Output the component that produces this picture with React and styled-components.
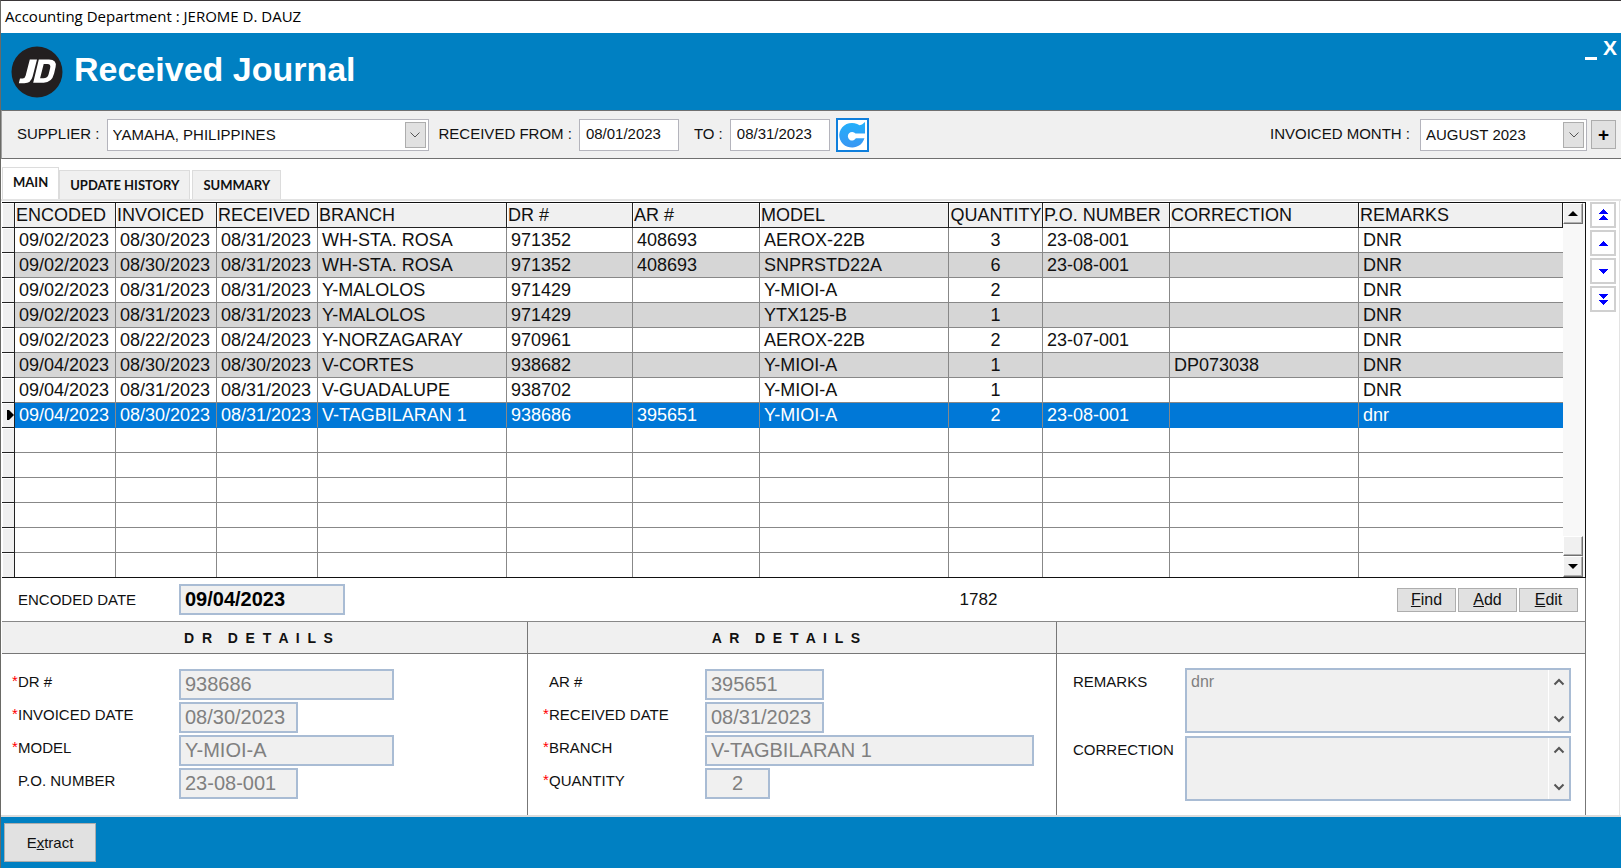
import React from 'react';
import styled, { createGlobalStyle, css } from 'styled-components';

const columns = [
  { key: 'encoded', title: 'ENCODED', width: 101 },
  { key: 'invoiced', title: 'INVOICED', width: 101 },
  { key: 'received', title: 'RECEIVED', width: 101 },
  { key: 'branch', title: 'BRANCH', width: 189 },
  { key: 'dr', title: 'DR #', width: 126 },
  { key: 'ar', title: 'AR #', width: 127 },
  { key: 'model', title: 'MODEL', width: 189 },
  { key: 'quantity', title: 'QUANTITY', width: 94, center: true },
  { key: 'po', title: 'P.O. NUMBER', width: 127 },
  { key: 'correction', title: 'CORRECTION', width: 189 },
  { key: 'remarks', title: 'REMARKS', width: 204 },
];

const rows = [
  { encoded: '09/02/2023', invoiced: '08/30/2023', received: '08/31/2023', branch: 'WH-STA. ROSA', dr: '971352', ar: '408693', model: 'AEROX-22B', quantity: 3, po: '23-08-001', remarks: 'DNR' },
  { encoded: '09/02/2023', invoiced: '08/30/2023', received: '08/31/2023', branch: 'WH-STA. ROSA', dr: '971352', ar: '408693', model: 'SNPRSTD22A', quantity: 6, po: '23-08-001', remarks: 'DNR' },
  { encoded: '09/02/2023', invoiced: '08/31/2023', received: '08/31/2023', branch: 'Y-MALOLOS', dr: '971429', model: 'Y-MIOI-A', quantity: 2, remarks: 'DNR' },
  { encoded: '09/02/2023', invoiced: '08/31/2023', received: '08/31/2023', branch: 'Y-MALOLOS', dr: '971429', model: 'YTX125-B', quantity: 1, remarks: 'DNR' },
  { encoded: '09/02/2023', invoiced: '08/22/2023', received: '08/24/2023', branch: 'Y-NORZAGARAY', dr: '970961', model: 'AEROX-22B', quantity: 2, po: '23-07-001', remarks: 'DNR' },
  { encoded: '09/04/2023', invoiced: '08/30/2023', received: '08/30/2023', branch: 'V-CORTES', dr: '938682', model: 'Y-MIOI-A', quantity: 1, correction: 'DP073038', remarks: 'DNR' },
  { encoded: '09/04/2023', invoiced: '08/31/2023', received: '08/31/2023', branch: 'V-GUADALUPE', dr: '938702', model: 'Y-MIOI-A', quantity: 1, remarks: 'DNR' },
  { encoded: '09/04/2023', invoiced: '08/30/2023', received: '08/31/2023', branch: 'V-TAGBILARAN 1', dr: '938686', ar: '395651', model: 'Y-MIOI-A', quantity: 2, po: '23-08-001', remarks: 'dnr' },
  {}, {}, {}, {}, {}, {},
];

const selectedRow = 7;

const Chevron = ({ up }) => (
  <svg width="12" height="8" viewBox="0 0 12 8" fill="none" stroke="currentColor" aria-hidden="true">
    <path d={up ? 'M1.5 6.5L6 2l4.5 4.5' : 'M1.5 1.5L6 6l4.5-4.5'} />
  </svg>
);

const Triangle = ({ down, double }) => (
  <svg width="10" height="12" viewBox="0 0 10 12" fill="currentColor" shapeRendering="crispEdges" aria-hidden="true">
    {double ? (
      <path d={down ? 'M0 1h10L5 6zM0 7h10L5 12z' : 'M0 5h10L5 0zM0 11h10L5 6z'} />
    ) : (
      <path d={down ? 'M0 4h10L5 9z' : 'M0 9h10L5 4z'} />
    )}
  </svg>
);

const Logo = () => (
  <svg width="52" height="52" viewBox="0 0 52 52" aria-label="JD" role="img">
    <circle cx="26" cy="26" r="25.5" fill="#231f20" />
    <path
      d="M18.8 13.5h7.2l-4.3 16.8q-1.7 7-8.4 7H7.8l1.2-4.8h2.6q2.3 0 3-2.8z"
      fill="#fff"
    />
    <path
      fillRule="evenodd"
      d="M27.8 13.5H38q8.200 0 6.600 7.600l-1.500 6.400q-2.300 9.200-10.400 9.200H22.200zM32.700 18l-3.600 14.300h3.100q4.500 0 5.500-4.400l1.400-5.600q1.100-4.300-2.700-4.300z"
      fill="#fff"
    />
  </svg>
);

const DropDown = ({ id, value, width }) => (
  <SelectBox $width={width}>
    <select id={id} defaultValue={value}>
      <option>{value}</option>
    </select>
    <span><Chevron /></span>
  </SelectBox>
);

const Field = ({ id, label, value, required, width, center }) => (
  <FieldRow>
    <FieldLabel htmlFor={id}>
      <i>{required && '*'}</i>
      {label}
    </FieldLabel>
    <TextField id={id} defaultValue={value} $width={width} $center={center} disabled />
  </FieldRow>
);

const Memo = ({ id, label, value }) => (
  <MemoRow>
    <label htmlFor={id}>{label}</label>
    <MemoBox>
      <textarea id={id} defaultValue={value} disabled />
      <div>
        <Chevron up />
        <Chevron />
      </div>
    </MemoBox>
  </MemoRow>
);

const App = () => {
  return (
    <>
      <GlobalStyle />
      <Window>
        <TitleBar>Accounting Department : JEROME D. DAUZ</TitleBar>

        <Header>
          <Logo />
          <h1>Received Journal</h1>
          <WindowButtons>
            <button type="button" aria-label="Minimize">
              <svg width="12" height="3" viewBox="0 0 12 3" aria-hidden="true"><path fill="#fff" d="M0 0h12v3H0z" /></svg>
            </button>
            <button type="button">X</button>
          </WindowButtons>
        </Header>

        <Filters>
          <label htmlFor="supplier">SUPPLIER :</label>
          <DropDown id="supplier" value="YAMAHA, PHILIPPINES" width={322} />
          <label htmlFor="from">RECEIVED FROM :</label>
          <DateInput id="from" defaultValue="08/01/2023" />
          <label htmlFor="to">TO :</label>
          <DateInput id="to" defaultValue="08/31/2023" />
          <RefreshButton type="button" aria-label="Refresh">
            <svg width="28" height="28" viewBox="0 0 28 28" aria-hidden="true">
              <defs>
                <linearGradient id="refresh" x2="0" y2="1">
                  <stop offset="0" stopColor="#22b0fb" />
                  <stop offset="1" stopColor="#3a96f3" />
                </linearGradient>
              </defs>
              <path
                d="M27 1v12H14v4h12.500A12.800 12.300 0 1 1 21.500 4.200L24 3.500z"
                fill="url(#refresh)"
              />
              <path d="M17.500 12.500a4.300 4.300 0 1 0 .4 4.800H27v-1.200H15v-2.600h12v-1z" fill="#fff" />
            </svg>
          </RefreshButton>
          <Spacer />
          <label htmlFor="month">INVOICED MONTH :</label>
          <DropDown id="month" value="AUGUST 2023" width={167} />
          <PlusButton type="button">+</PlusButton>
        </Filters>

        <Tabs role="tablist">
          <Tab type="button" role="tab" aria-selected="true" $active>MAIN</Tab>
          <Tab type="button" role="tab" aria-selected="false">UPDATE HISTORY</Tab>
          <Tab type="button" role="tab" aria-selected="false">SUMMARY</Tab>
        </Tabs>

        <Page>
          <Panel>
            <Grid>
              <Table>
                <colgroup>
                  <Col $width={13} />
                  {columns.map((c) => <Col key={c.key} $width={c.width} />)}
                </colgroup>
                <thead>
                  <tr>
                    <Marker />
                    {columns.map((c) => <HeadCell key={c.key} $center={c.center}>{c.title}</HeadCell>)}
                  </tr>
                </thead>
                <tbody>
                  {rows.map((row, i) => (
                    <Row key={i} $striped={i < selectedRow && i % 2 === 1} $selected={i === selectedRow}>
                      <Marker>
                        {i === selectedRow && (
                          <svg width="7" height="10" viewBox="0 0 7 10" aria-hidden="true"><path d="M0 0h2l5 5-5 5H0z" /></svg>
                        )}
                      </Marker>
                      {columns.map((c) => <Cell key={c.key} $center={c.center}>{row[c.key]}</Cell>)}
                    </Row>
                  ))}
                </tbody>
              </Table>
              <ScrollBar>
                <ScrollButton type="button" aria-label="Scroll up">
                  <svg width="10" height="5" viewBox="0 0 10 5" aria-hidden="true"><path d="M0 5h10L5 0z" /></svg>
                </ScrollButton>
                <Spacer />
                <ScrollThumb />
                <ScrollButton type="button" aria-label="Scroll down">
                  <svg width="10" height="5" viewBox="0 0 10 5" aria-hidden="true"><path d="M0 0h10L5 5z" /></svg>
                </ScrollButton>
              </ScrollBar>
            </Grid>

            <EncodedRow>
              <FieldLabel htmlFor="encoded"><i />ENCODED DATE</FieldLabel>
              <EncodedInput id="encoded" defaultValue="09/04/2023" readOnly />
              <RecordCount>1782</RecordCount>
              <SmallButton type="button"><u>F</u>ind</SmallButton>
              <SmallButton type="button"><u>A</u>dd</SmallButton>
              <SmallButton type="button"><u>E</u>dit</SmallButton>
            </EncodedRow>

            <Details>
              <Section>
                <h2>{'D  R    D  E  T  A  I  L  S'}</h2>
                <Fields>
                  <Field id="dr" label="DR #" value="938686" width={215} required />
                  <Field id="invoiced" label="INVOICED DATE" value="08/30/2023" width={119} required />
                  <Field id="model" label="MODEL" value="Y-MIOI-A" width={215} required />
                  <Field id="po" label="P.O. NUMBER" value="23-08-001" width={119} />
                </Fields>
              </Section>
              <Section>
                <h2>{'A  R    D  E  T  A  I  L  S'}</h2>
                <Fields $indent>
                  <Field id="ar" label="AR #" value="395651" width={119} />
                  <Field id="received" label="RECEIVED DATE" value="08/31/2023" width={119} required />
                  <Field id="branch" label="BRANCH" value="V-TAGBILARAN 1" width={329} required />
                  <Field id="quantity" label="QUANTITY" value="2" width={65} required center />
                </Fields>
              </Section>
              <Section>
                <h2>{' '}</h2>
                <Memos>
                  <Memo id="remarks" label="REMARKS" value="dnr" />
                  <Memo id="correction" label="CORRECTION" value="" />
                </Memos>
              </Section>
            </Details>
          </Panel>

          <Navigator>
            <button type="button" aria-label="First"><Triangle double /></button>
            <button type="button" aria-label="Previous"><Triangle /></button>
            <button type="button" aria-label="Next"><Triangle down /></button>
            <button type="button" aria-label="Last"><Triangle down double /></button>
          </Navigator>
        </Page>

        <Footer>
          <button type="button">E<u>x</u>tract</button>
        </Footer>
      </Window>
    </>
  );
}

const GlobalStyle = createGlobalStyle`
  * {
    box-sizing: border-box;
  }

  body {
    margin: 0;
    background: #fff;
    color: #111;
    font-family: "Liberation Sans", Arial, sans-serif;
    font-size: 15px;
  }

  button, input, select, textarea {
    margin: 0;
    padding: 0;
    border-radius: 0;
    color: inherit;
    font: inherit;
  }

  button svg {
    display: block;
  }
`;

const center = css`
  display: flex;
  align-items: center;
  justify-content: center;
`;

const Window = styled.div`
  display: flex;
  flex-direction: column;
  min-height: 100vh;
  border-top: 1px solid #3a3638;
  border-left: 1px solid #6a6a66;
`;

const TitleBar = styled.div`
  height: 32px;
  padding-left: 4px;
  color: #000;
  font-family: "Open Sans", "Segoe UI", sans-serif;
  font-size: 15px;
  line-height: 31px;
`;

const Header = styled.header`
  display: flex;
  align-items: center;
  gap: 11px;
  height: 77px;
  padding-left: 10px;
  background: #0080c2;

  h1 {
    flex: 1;
    margin: 0;
    padding-bottom: 5px;
    color: #fff;
    font-size: 34px;
    font-weight: 700;
    line-height: 36px;
  }
`;

const WindowButtons = styled.div`
  display: flex;
  align-self: flex-start;
  align-items: flex-end;
  gap: 6px;
  padding: 3px 4px 0 0;

  button {
    padding: 0 0 4px;
    border: none;
    background: none;
    color: #fff;
    font-size: 21px;
    font-weight: 700;
    line-height: 24px;
  }
`;

const Filters = styled.div`
  display: flex;
  align-items: center;
  height: 49px;
  padding: 0 5px 0 15px;
  border-top: 1px solid #707070;
  border-bottom: 1px solid #707070;
  border-left: 1px solid #a0a0a0;
  background: #f0f0f0;

  label {
    padding-bottom: 2px;
    white-space: pre;
  }

  label + * {
    margin: 0 10px 0 7px;
  }

  label[for="to"] {
    margin-left: 5px;
  }

  label[for="to"] + * {
    margin-right: 6px;
  }

  label[for="month"] + * {
    margin: 0 4px 0 10px;
  }
`;

const Spacer = styled.div`
  flex: 1;
`;

const SelectBox = styled.div`
  display: grid;
  width: ${(p) => p.$width}px;
  height: 32px;
  border: 1px solid #b4b4bc;
  background: #fff;

  select {
    grid-area: 1 / 1;
    width: 100%;
    padding-left: 5px;
    border: none;
    appearance: none;
    background: none;
  }

  span {
    ${center}
    grid-area: 1 / 1;
    justify-self: end;
    width: 21px;
    margin: 2px;
    border: 1px solid #adadad;
    background: #e1e1e1;
    color: #555;
    pointer-events: none;
  }
`;

const DateInput = styled.input`
  width: 100px;
  height: 32px;
  padding: 0 0 2px 6px;
  border: 1px solid #b4b4bc;
  background: #fff;
`;

const RefreshButton = styled.button`
  ${center}
  width: 33px;
  height: 34px;
  border: 2px solid #0f7fdc;
  background: #fff;
`;

const PlusButton = styled.button`
  width: 25px;
  height: 29px;
  border: 1px solid #adadad;
  background: #e1e1e1;
  color: #000;
  font-size: 19px;
  font-weight: 700;
  line-height: 24px;
`;

const Tabs = styled.div`
  display: flex;
  align-items: flex-end;
  gap: 2px;
  height: 40px;
  padding-left: 1px;
`;

const Tab = styled.button`
  height: 29px;
  padding: 0 10px;
  border: 1px solid #dcdcdc;
  border-bottom: none;
  background: #f0f0f0;
  font-family: Lato, Carlito, sans-serif;
  font-size: 13px;
  font-weight: 700;

  ${(p) => p.$active && css`
    height: 32px;
    margin-right: -2px;
    padding-bottom: 3px;
    background: #fff;
  `}
`;

const Page = styled.main`
  display: flex;
  border-top: 2px solid #e3e3e3;
  border-bottom: 2px solid #dcdcdc;
`;

const Panel = styled.div`
  flex: 1;
  min-width: 0;
  padding: 1px 0 0 1px;
  display: flex;
  flex-direction: column;
`;

const Grid = styled.div`
  display: flex;
  border: solid #111;
  border-width: 1px 1px 1px 0;
`;

const Table = styled.table`
  flex: 1;
  min-width: 0;
  border-spacing: 0;
  table-layout: fixed;
  font-size: 18px;
  line-height: 24px;
  white-space: nowrap;

  tbody tr:last-child > * {
    height: 24px;
    border-bottom: none;
  }
`;

const Col = styled.col`
  width: ${(p) => p.$width}px;
`;

const Marker = styled.th`
  height: 25px;
  padding: 0;
  border-right: 1px solid #222;
  border-bottom: 1px solid #222;
  background: #f0f0f0;
  box-shadow: inset 1px 1px #fff;

  svg {
    display: block;
    margin-left: auto;
  }
`;

const HeadCell = styled.th`
  height: 25px;
  padding: 0 0 0 1px;
  border-right: 1px solid #222;
  border-bottom: 1px solid #222;
  background: #f0f0f0;
  box-shadow: inset 1px 1px #fff;
  font-weight: 400;
  text-align: ${(p) => (p.$center ? 'center' : 'left')};
`;

const Cell = styled.td`
  height: 25px;
  padding: 0 4px;
  border-right: 1px solid #888;
  border-bottom: 1px solid #888;
  text-align: ${(p) => (p.$center ? 'center' : 'left')};

  &:last-child {
    border-right: none;
  }
`;

const Row = styled.tr`
  ${(p) => p.$striped && css`
    ${Cell} {
      background: #d6d6d6;
    }
  `}

  ${(p) => p.$selected && css`
    ${Cell} {
      border-bottom-color: #0078d7;
      background: #0078d7;
      color: #fff;
    }
  `}
`;

const ScrollBar = styled.div`
  display: flex;
  flex-direction: column;
  width: 22px;
  background: #f8f8f8;
`;

const ScrollButton = styled.button`
  ${center}
  width: 20px;
  height: 21px;
  border: 1px solid;
  border-color: #fff #707070 #707070 #fff;
  background: #f0f0f0;
  box-shadow: inset -1px -1px #b0b0b0;
`;

const ScrollThumb = styled.div`
  width: 20px;
  height: 20px;
  border: 1px solid;
  border-color: #fff #707070 #707070 #fff;
  background: #f0f0f0;
  box-shadow: inset -1px -1px #b0b0b0;
`;

const EncodedRow = styled.div`
  display: flex;
  align-items: center;
  gap: 2px;
  height: 44px;
  padding: 0 7px 0 10px;
  border-right: 1px solid #777;
  border-bottom: 1px solid #888;
`;

const FieldLabel = styled.label`
  display: flex;
  width: 165px;
  line-height: 18px;

  i {
    width: 6px;
    color: #f00;
    font-style: normal;
    line-height: 16px;
  }
`;

const field = css`
  height: 31px;
  padding: 0 4px;
  border: 2px solid #a9bcd4;
  background: #f0f0f0;
  font-size: 20px;
`;

const EncodedInput = styled.input`
  ${field}
  width: 166px;
  color: #000;
  font-weight: 700;
`;

const RecordCount = styled.output`
  flex: 1;
  padding-left: 215px;
  font-size: 17px;
  text-align: center;
`;

const SmallButton = styled.button`
  width: 59px;
  height: 24px;
  border: 1px solid #adadad;
  background: #e1e1e1;
  font-size: 16px;
  line-height: 20px;
`;

const Details = styled.div`
  display: grid;
  grid-template-columns: 526fr 529fr 529fr;
  flex: 1;
`;

const Section = styled.section`
  min-width: 0;
  border-right: 1px solid #777;

  h2 {
    height: 32px;
    margin: 0;
    padding-right: 12px;
    border-bottom: 1px solid #777;
    background: #f0f0f0;
    font-size: 14px;
    font-weight: 700;
    line-height: 32px;
    text-align: center;
    white-space: pre;
  }
`;

const Fields = styled.div`
  display: flex;
  flex-direction: column;
  gap: 2px;
  padding: 15px 22px 16px ${(p) => (p.$indent ? 15 : 10)}px;

  ${FieldLabel} {
    width: ${(p) => (p.$indent ? 162 : 167)}px;
  }
`;

const FieldRow = styled.div`
  display: flex;
  align-items: flex-start;

  ${FieldLabel} {
    flex: none;
    padding-top: 4px;
    white-space: nowrap;
  }
`;

const TextField = styled.input`
  ${field}
  width: ${(p) => p.$width}px;
  min-width: 0;
  color: #808080;
  text-align: ${(p) => (p.$center ? 'center' : 'left')};
`;

const Memos = styled.div`
  display: flex;
  flex-direction: column;
  gap: 3px;
  padding: 14px 14px 14px 16px;
`;

const MemoRow = styled.div`
  display: flex;

  label {
    width: 112px;
    padding-top: 5px;
    line-height: 18px;
  }
`;

const MemoBox = styled.div`
  display: flex;
  flex: 1;
  min-width: 0;
  height: 65px;
  border: 2px solid #a9bcd4;
  background: #f0f0f0;

  textarea {
    flex: 1;
    min-width: 0;
    padding: 3px 4px;
    border: none;
    background: none;
    color: #808080;
    font-size: 16px;
    line-height: 18px;
    resize: none;
  }

  div {
    display: flex;
    flex-direction: column;
    align-items: center;
    justify-content: space-between;
    width: 21px;
    padding: 8px 0;
    border-left: 1px solid #fff;
    color: #555;
  }

  path {
    stroke-width: 2;
  }
`;

const Navigator = styled.nav`
  display: flex;
  flex-direction: column;
  gap: 2px;
  width: 34px;
  margin-right: 1px;
  padding: 1px 0 0 4px;
  border-right: 1px solid #e3e3e3;

  button {
    ${center}
    width: 26px;
    height: 26px;
    border: 2px solid #d0d0d0;
    background: #fff;
    color: #00f;
  }
`;

const Footer = styled.footer`
  flex: 1;
  padding: 6px 3px;
  background: #0080c2;

  button {
    width: 92px;
    height: 39px;
    border: 1px solid #adadad;
    background: #e1e1e1;
  }
`;

export default App;
